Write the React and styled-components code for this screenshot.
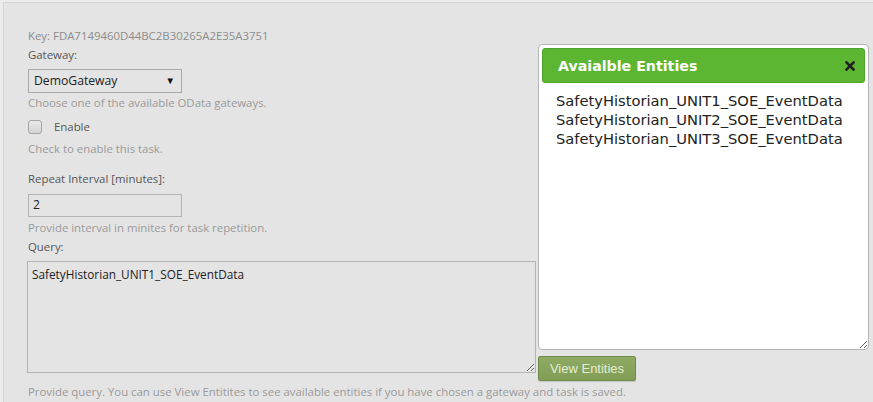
import React from 'react'
import styled, { createGlobalStyle } from 'styled-components'

const GlobalStyle = createGlobalStyle`
  html, body {
    margin: 0;
    padding: 0;
    background: #ececec;
    overflow: hidden;
  }
  body {
    font-family: 'Open Sans', 'Noto Sans', sans-serif;
  }
`

const Panel = styled.div`
  margin: 2px 0 0 3px;
  height: 400px;
  box-sizing: border-box;
  padding: 25px 0 0 24px;
  background: #e4e4e4;
  border-top: 1px solid #d6d6d6;
  border-left: 1px solid #d6d6d6;
  font-size: 11.4px;
  line-height: 16px;
`

const Row = styled.div`
  display: flex;
  align-items: flex-start;
  gap: 2px;
`

const Fields = styled.div`
  width: 508px;
  display: flex;
  flex-direction: column;
`

const Key = styled.div`
  color: #8c8c8c;
`

const Label = styled.div`
  color: #555;
  margin-top: ${p => p.gap || 3}px;
`

const Help = styled.div`
  color: #9a9a9a;
  margin-top: ${p => p.gap || 2}px;
  white-space: nowrap;
`

const Select = styled.div`
  margin-top: 6px;
  width: 154px;
  height: 24px;
  box-sizing: border-box;
  border: 1px solid #a9a9a9;
  display: flex;
  align-items: center;
  justify-content: space-between;
  padding: 0 6px 0 5px;
  color: #222;
  font-size: 12.2px;
`

const Arrow = styled.span`
  font-size: 9.5px;
  color: #111;
`

const CheckRow = styled.label`
  margin-top: 8px;
  height: 16px;
  display: flex;
  align-items: center;
  gap: 12px;
  color: #555;
`

const Box = styled.span`
  width: 12px;
  height: 12px;
  border: 1px solid #a6a6a6;
  border-radius: 3px;
  background: linear-gradient(#e9e9e9, #d4d4d4);
`

const Input = styled.div`
  margin-top: 7px;
  width: 154px;
  height: 23px;
  box-sizing: border-box;
  border: 1px solid #b4b4b4;
  padding: 2px 4px;
  color: #222;
  font-size: 12px;
`

const Query = styled.textarea`
  margin: 6px 0 0 -1px;
  width: 509px;
  height: 112px;
  box-sizing: border-box;
  border: 1px solid #b4b4b4;
  background: transparent;
  font: inherit;
  font-size: 11.8px;
  color: #222;
  padding: 4px 4px;
  resize: both;
  outline: none;
`

const Side = styled.div`
  margin-top: 16px;
  display: flex;
  flex-direction: column;
  align-items: flex-start;
`

const Dialog = styled.div`
  width: 331px;
  height: 306px;
  box-sizing: border-box;
  background: #fff;
  border: 1px solid #b5b5b5;
  border-radius: 4px;
  padding: 3px;
  resize: both;
  overflow: hidden;
  font-family: 'DejaVu Sans', Verdana, sans-serif;
`

const Header = styled.div`
  height: 35px;
  box-sizing: border-box;
  background: #5db632;
  border: 1px solid #51a42b;
  border-radius: 3px;
  display: flex;
  align-items: center;
  justify-content: space-between;
  padding: 0 9px 0 15px;
`

const Title = styled.span`
  color: #fff;
  font-weight: bold;
  font-size: 14.2px;
`

const Close = styled.svg`
  width: 10px;
  height: 10px;
`

const Entities = styled.div`
  padding: 8px 0 0 14px;
  font-size: 14.7px;
  line-height: 19px;
  color: #222;
`

const ViewButton = styled.button`
  margin-top: 6px;
  width: 98px;
  height: 25px;
  border: 1px solid #6f8b4b;
  border-radius: 2px;
  background: linear-gradient(#8eaa63, #819d56);
  color: #e4edd4;
  font-family: 'Liberation Sans', Arial, sans-serif;
  font-size: 13px;
  padding: 0;
  box-shadow: 0 1px 1px rgba(0, 0, 0, 0.15);
`

const entities = [
  'SafetyHistorian_UNIT1_SOE_EventData',
  'SafetyHistorian_UNIT2_SOE_EventData',
  'SafetyHistorian_UNIT3_SOE_EventData'
]

export default () => (
  <>
    <GlobalStyle />
    <Panel>
      <Row>
        <Fields>
          <Key>Key: FDA7149460D44BC2B30265A2E35A3751</Key>
          <Label>Gateway:</Label>
          <Select>
            <span>DemoGateway</span>
            <Arrow>▼</Arrow>
          </Select>
          <Help>Choose one of the available OData gateways.</Help>
          <CheckRow>
            <Box />
            Enable
          </CheckRow>
          <Help gap={6}>Check to enable this task.</Help>
          <Label gap={14}>Repeat Interval [minutes]:</Label>
          <Input>2</Input>
          <Help gap={3}>Provide interval in minites for task repetition.</Help>
          <Label>Query:</Label>
          <Query readOnly defaultValue="SafetyHistorian_UNIT1_SOE_EventData" />
        </Fields>
        <Side>
          <Dialog>
            <Header>
              <Title>Avaialble Entities</Title>
              <Close viewBox="0 0 10 10">
                <path d="M1.5 1.5 L8.5 8.5 M8.5 1.5 L1.5 8.5" stroke="#222" strokeWidth="2.6" strokeLinecap="square" />
              </Close>
            </Header>
            <Entities>
              {entities.map(e => (
                <div key={e}>{e}</div>
              ))}
            </Entities>
          </Dialog>
          <ViewButton>View Entities</ViewButton>
        </Side>
      </Row>
      <Help gap={3}>
        Provide query. You can use View Entitites to see available entities if you have chosen a gateway and task is saved.
      </Help>
    </Panel>
  </>
)
